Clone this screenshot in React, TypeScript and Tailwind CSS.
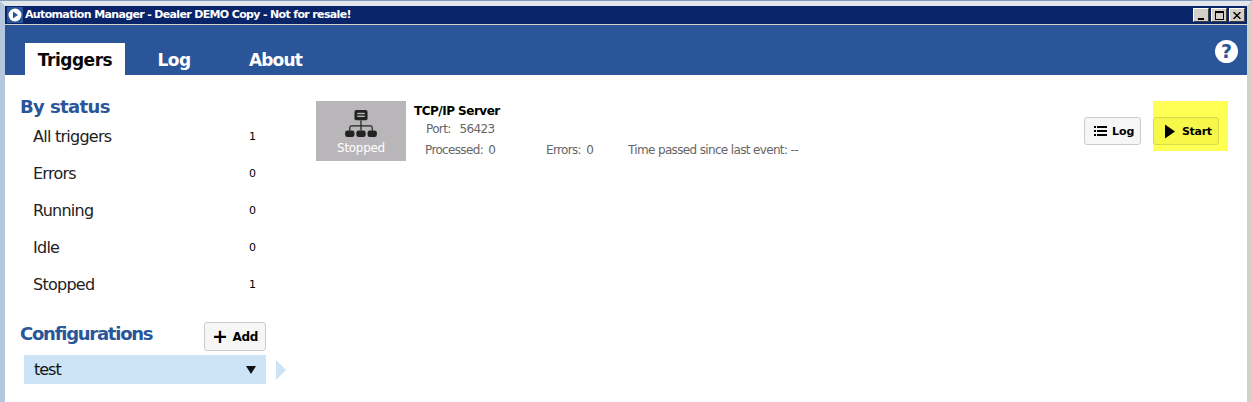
import React from 'react';

const statusRows = [
  { label: 'All triggers', count: 1 },
  { label: 'Errors', count: 0 },
  { label: 'Running', count: 0 },
  { label: 'Idle', count: 0 },
  { label: 'Stopped', count: 1 },
];

const NetworkIcon = () => (
  <svg width="32" height="28" viewBox="0 0 34 30" className="text-[#222]">
    <rect x="10" y="0" width="14" height="11" rx="2" fill="currentColor" />
    <rect x="13" y="3" width="8" height="1.5" fill="#b9b6b9" />
    <rect x="13" y="6" width="8" height="1.5" fill="#b9b6b9" />
    <path d="M17 11v6M5 22v-3a2 2 0 0 1 2-2h20a2 2 0 0 1 2 2v3M17 17v5" stroke="currentColor" strokeWidth="1.3" fill="none" />
    <rect x="0" y="22" width="10" height="7" rx="2.5" fill="currentColor" />
    <rect x="12" y="22" width="10" height="7" rx="2.5" fill="currentColor" />
    <rect x="24" y="22" width="10" height="7" rx="2.5" fill="currentColor" />
  </svg>
);

const App: React.FC = () => {
  return (
    <div className="w-[1252px] h-[402px] overflow-hidden bg-[#d4d0c8] border-t border-[#7f9db9] font-['DejaVu_Sans',sans-serif]">
      <div className="h-full border-l-[5px] border-t-[5px] border-r-[5px] border-l-[#b5c7de] border-t-[#e2e6ea] border-r-[#d4d0c8] flex flex-col">
        <div className="h-[19px] shrink-0 bg-[#0a246a] border-b border-[#d4d0c8] flex items-center justify-between pl-[2px] pr-[2px]">
          <div className="flex items-center gap-[2px]">
            <div className="w-[16px] h-[16px] bg-[#2a5699] flex items-center justify-center">
              <svg width="14" height="14" viewBox="0 0 14 14">
                <circle cx="7" cy="7" r="6.5" fill="#fff" />
                <path d="M5 3.500 10 7l-5 3.500z" fill="#2a5699" />
              </svg>
            </div>
            <span className="text-[11px] font-bold text-white tracking-[-0.65px]">Automation Manager - Dealer DEMO Copy - Not for resale!</span>
          </div>
          <div className="flex gap-[2px] text-black">
            <div className="w-[16px] h-[14px] bg-[#d4d0c8] border border-white border-r-[#404040] border-b-[#404040] flex items-end justify-center pb-[1px]">
              <div className="w-[6px] h-[2px] bg-black" />
            </div>
            <div className="w-[16px] h-[14px] bg-[#d4d0c8] border border-white border-r-[#404040] border-b-[#404040] flex items-center justify-center">
              <div className="w-[9px] h-[9px] border border-black border-t-2" />
            </div>
            <div className="w-[16px] h-[14px] bg-[#d4d0c8] border border-white border-r-[#404040] border-b-[#404040] flex items-center justify-center">
              <svg width="8" height="7" viewBox="0 0 8 7">
                <path d="M0.500 0 7.500 7M7.500 0 0.500 7" stroke="#000" strokeWidth="1.400" />
              </svg>
            </div>
          </div>
        </div>

        <div className="h-[50px] shrink-0 bg-[#2a5699] flex items-end justify-between pl-[20px] pr-[9px]">
          <div className="flex items-end font-bold text-[17px] tracking-[-0.5px]">
            <div className="w-[100px] h-[32px] pt-[3px] bg-white text-[#0a0a0a] flex items-center justify-center">Triggers</div>
            <div className="w-[98px] h-[32px] pt-[3px] text-white flex items-center justify-center">Log</div>
            <div className="w-[105px] h-[32px] pt-[3px] text-white flex items-center justify-center tracking-[-0.8px]">About</div>
          </div>
          <div className="self-start mt-[15px] w-[23px] h-[23px] rounded-full bg-white text-[#2a5699] flex items-center justify-center text-[19px] font-bold leading-none">?</div>
        </div>

        <div className="flex-1 bg-white flex">
          <aside className="w-[261px] shrink-0 pl-[15px] pt-[21px] flex flex-col">
            <h2 className="text-[18px] font-bold text-[#2a5699] leading-[22px] tracking-[-0.6px]">By status</h2>
            <ul className="pl-[13px] pr-[10px] text-[16px] text-[#222] tracking-[-0.75px]">
              {statusRows.map(row => (
                <li key={row.label} className="h-[37px] flex items-center justify-between">
                  <span>{row.label}</span>
                  <span className="pt-[2px] text-[11px] text-black tracking-normal">{row.count}</span>
                </li>
              ))}
            </ul>
            <div className="mt-[19px] flex items-center justify-between">
              <h2 className="mb-[6px] text-[18px] leading-[22px] font-bold text-[#2a5699] tracking-[-1.25px]">Configurations</h2>
              <button className="w-[62px] h-[29px] bg-[#f6f6f6] border border-[#ccc] rounded-[3px] flex items-center justify-center gap-[5px] text-[12px] font-bold text-black tracking-[-0.3px]">
                <span className="text-[19px] leading-none font-bold">+</span>Add
              </button>
            </div>
            <div className="relative mt-[4px] ml-[4px] h-[29px] bg-[#cce4f5] flex items-center justify-between pl-[10px] pr-[10px] text-[16px] text-[#111] tracking-[-1px]">
              <span>test</span>
              <span className="w-0 h-0 border-l-[5px] border-r-[5px] border-t-[8px] border-l-transparent border-r-transparent border-t-[#111]" />
              <span className="absolute left-full ml-[10px] top-[5px] w-0 h-0 border-y-[10px] border-l-[10px] border-y-transparent border-l-[#cce4f5]" />
            </div>
          </aside>

          <main className="flex-1 pt-[26px] pl-[50px] pr-[28px] flex justify-between items-start">
            <div className="flex gap-[8px]">
              <div className="w-[90px] h-[60px] bg-[#b9b6b9] flex flex-col items-center pt-[9px]">
                <NetworkIcon />
                <span className="text-[12px] leading-[14px] mt-[3px] text-white tracking-[-0.3px]">Stopped</span>
              </div>
              <div className="pt-[2px]">
                <div className="text-[12px] leading-[16px] font-bold text-black tracking-[-0.5px]">TCP/IP Server</div>
                <div className="pl-[12px] mt-[2px] text-[12px] leading-[16px] text-[#666] tracking-[-0.65px] flex gap-[9px]">
                  <span>Port:</span><span>56423</span>
                </div>
                <div className="pl-[11px] mt-[5px] text-[12px] leading-[16px] text-[#666] tracking-[-0.65px] flex">
                  <span className="w-[121px]">Processed: <span className="ml-[2px]">0</span></span>
                  <span className="w-[82px]">Errors: <span className="ml-[2px]">0</span></span>
                  <span>Time passed since last event: --</span>
                </div>
              </div>
            </div>

            <div className="mt-[16px] flex items-center gap-[12px]">
              <button className="w-[57px] h-[28px] pl-[9px] bg-[#f6f6f6] border border-[#ccc] rounded-[3px] flex items-center gap-[5px] text-[11px] font-bold text-black">
                <svg width="13" height="10" viewBox="0 0 13 10">
                  <path d="M0 0h2v2H0zM0 4h2v2H0zM0 8h2v2H0zM3 0h10v2H3zM3 4h10v2H3zM3 8h10v2H3z" fill="#000" />
                </svg>
                <span className="pt-[2px]">Log</span>
              </button>
              <div className="relative w-[66px] h-[28px]">
                <span className="absolute left-0 top-[-16px] w-[75px] h-[50px] bg-[#ffff54]" />
                <button className="relative w-full h-full pl-[11px] bg-[#f7f74a] border border-[#d8d84a] rounded-[3px] flex items-center gap-[7px] text-[11px] font-bold text-black tracking-[-0.3px]">
                  <svg width="10" height="15" viewBox="0 0 10 14">
                    <path d="M0 0 10 7 0 14z" fill="#000" />
                  </svg>
                  <span className="pt-[2px]">Start</span>
                </button>
              </div>
            </div>
          </main>
        </div>
      </div>
    </div>
  );
};

export default App;
